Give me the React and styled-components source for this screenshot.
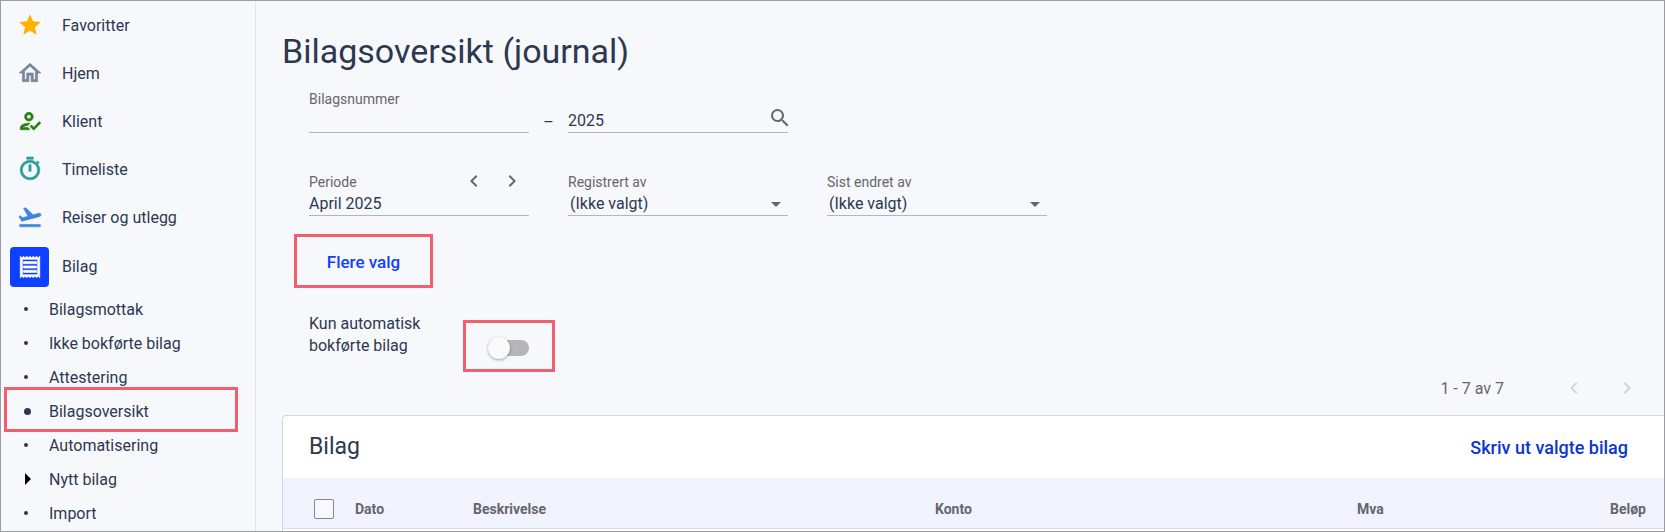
import React from "react";
import styled, { createGlobalStyle, css } from "styled-components";
import {
  MdStar,
  MdOutlineHome,
  MdOutlineHowToReg,
  MdOutlineTimer,
  MdFlightTakeoff,
  MdOutlineReceipt,
  MdSearch,
  MdArrowDropDown,
  MdChevronLeft,
  MdChevronRight,
} from "react-icons/md";

const ink = "#2d3850";
const muted = "#66666a";
const rule = "#b4b5ba";
const blue = "#0f40ff";
const marker = "#ef5f6e";

const GlobalStyle = createGlobalStyle`
  *, *::before, *::after { box-sizing: border-box; }
  body {
    margin: 0;
    background: #f7f8fc;
    color: ${ink};
    font-family: Roboto, "Liberation Sans", sans-serif;
    font-size: 16px;
  }
  button, input, select { font: inherit; color: inherit; }
`;

const Frame = styled.div`
  display: flex;
  height: 100vh;
  overflow: hidden;
  border: 1px solid #9c9ca1;
`;

const Sidebar = styled.nav`
  flex: 0 0 255px;
  border-right: 1px solid #e4e5eb;
`;

const NavList = styled.ul`
  list-style: none;
  margin: 0;
  padding: 0;
`;

const NavLink = styled.a`
  display: flex;
  align-items: center;
  gap: 13px;
  height: ${(p) => (p.$active ? "51px" : "48px")};
  padding-left: 9px;
  color: inherit;
  text-decoration: none;
`;

const NavIcon = styled.span`
  display: grid;
  place-items: center;
  width: 39px;
  height: 40px;
  border-radius: 4px;
  font-size: 26px;
  color: ${(p) => p.$color};
  background: ${(p) => p.$fill || "transparent"};

  path:not([fill="none"]) {
    stroke: currentColor;
    stroke-width: ${(p) => (p.$bold ? "0.6px" : "0")};
  }
`;

const SubItem = styled.li`
  position: relative;
  ${(p) =>
    p.$marked &&
    css`
      &::after {
        content: "";
        position: absolute;
        inset: -7px 17px -4px 3px;
        border: 3px solid ${marker};
        pointer-events: none;
      }
    `}
`;

const SubLink = styled.a`
  display: flex;
  align-items: center;
  height: 34px;
  padding-left: 23px;
  color: inherit;
  text-decoration: none;
`;

const Bullet = styled.span`
  display: flex;
  width: 25px;

  &::before {
    content: "";
    ${(p) =>
      p.$kind === "arrow"
        ? css`
            margin-left: 1px;
            border-left: 6px solid #000;
            border-top: 6px solid transparent;
            border-bottom: 6px solid transparent;
          `
        : css`
            width: ${p.$kind === "current" ? "7px" : "4px"};
            height: ${p.$kind === "current" ? "7px" : "4px"};
            border-radius: 50%;
            background: ${ink};
          `}
  }
`;

const Main = styled.main`
  flex: 1;
  min-width: 0;
  display: flex;
  flex-direction: column;
  padding: 30px 0 0 26px;
`;

const Title = styled.h1`
  margin: 0 0 18px;
  font-size: 34px;
  line-height: 40px;
  font-weight: 400;
`;

const Filters = styled.form`
  padding-left: 27px;
`;

const NumberRow = styled.div`
  display: flex;
  align-items: flex-end;
  margin-bottom: 39px;
`;

const Dash = styled.span`
  width: 39px;
  text-align: center;
  line-height: 20px;
`;

const FilterRow = styled.div`
  display: flex;
  gap: 39px;
`;

const FieldBox = styled.div`
  width: 220px;
`;

const LabelLine = styled.div`
  display: flex;
  justify-content: space-between;
  align-items: center;
  height: 20px;
  font-size: 14px;
  color: ${muted};
`;

const ControlLine = styled.div`
  display: flex;
  align-items: flex-start;
  height: 24px;
  border-bottom: 1px solid ${rule};
  color: ${muted};
`;

const TextInput = styled.input`
  flex: 1;
  min-width: 0;
  height: 22px;
  padding: 0;
  border: 0;
  outline: 0;
  background: transparent;
  color: ${ink};
`;

const Select = styled.select`
  flex: 1;
  min-width: 0;
  height: 22px;
  padding: 0 0 0 2px;
  margin-right: -24px;
  border: 0;
  outline: 0;
  appearance: none;
  background: transparent;
  color: ${ink};
`;

const SelectLine = styled(ControlLine)`
  svg { pointer-events: none; }
`;

const IconButton = styled.button`
  display: grid;
  place-items: center;
  width: 24px;
  height: 24px;
  padding: 0;
  border: 0;
  background: transparent;
  font-size: 24px;
  color: ${muted};

  &:disabled { color: #d3d4d9; }
`;

const SearchButton = styled(IconButton)`
  width: 20px;
  margin-top: -3px;
`;

const PeriodSteps = styled.span`
  display: flex;
  gap: 14px;
  padding: 0 5px 2px 0;
`;

const Marked = styled.div`
  display: flex;
  align-items: center;
  justify-content: center;
  width: ${(p) => p.$width}px;
  border: 3px solid ${marker};
`;

const MoreMark = styled(Marked)`
  height: 54px;
  margin: 18px 0 25px -15px;
  padding-top: 2px;
`;

const TextButton = styled.button`
  height: 36px;
  padding: 0;
  border: 0;
  background: transparent;
  font-size: ${(p) => (p.$large ? "18px" : "17px")};
  font-weight: 500;
  color: ${(p) => p.$color};
`;

const ToggleRow = styled.div`
  display: flex;
  align-items: flex-start;
`;

const ToggleLabel = styled.label`
  width: 154px;
  padding-right: 34px;
  line-height: 22px;
`;

const ToggleMark = styled(Marked)`
  height: 52px;
  margin-top: 7px;
  padding: 3px 0 0 4px;
`;

const Toggle = styled.input`
  appearance: none;
  display: flex;
  align-items: center;
  width: 36px;
  height: 16px;
  margin: 0;
  border-radius: 8px;
  background: #b5b6ba;

  &::before {
    content: "";
    flex: none;
    width: 22px;
    height: 22px;
    margin-left: -5px;
    border-radius: 50%;
    background: #fafafa;
    box-shadow: 0 1px 3px rgba(0, 0, 0, 0.35);
  }

  &:checked::before { margin-left: 19px; }
`;

const Pager = styled.div`
  display: flex;
  align-items: center;
  justify-content: flex-end;
  height: 32px;
  margin-bottom: 11px;
  padding-right: 25px;
  color: ${muted};
`;

const PagerSteps = styled.div`
  display: flex;
  gap: 29px;
  margin-left: 58px;
`;

const Card = styled.section`
  flex: 1 0 auto;
  border: solid #d5d6dc;
  border-width: 1px 0 0 1px;
  border-radius: 4px 0 0 0;
  background: #fff;
  overflow: hidden;
`;

const CardHeader = styled.header`
  display: flex;
  align-items: center;
  justify-content: space-between;
  height: 62px;
  padding: 0 36px 0 26px;
`;

const CardTitle = styled.h2`
  margin: 0;
  font-size: 23px;
  line-height: 28px;
  font-weight: 400;
`;

const Table = styled.table`
  width: 100%;
  table-layout: fixed;
  border-collapse: separate;
  border-spacing: 0;
`;

const HeadCell = styled.th`
  width: ${(p) => (p.$width ? `${p.$width}px` : "auto")};
  height: 51px;
  padding: 12px ${(p) => (p.$right ? 18 : 0)}px 0 ${(p) => (p.$right ? 0 : 12)}px;
  border-bottom: 1px solid #dcdde3;
  background: #f1f3fe;
  color: ${muted};
  font-size: 14px;
  font-weight: 700;
  text-align: ${(p) => (p.$right ? "right" : "left")};
`;

const CheckCell = styled(HeadCell)`
  padding-left: 31px;
`;

const CheckBox = styled.input`
  appearance: none;
  display: block;
  width: 20px;
  height: 20px;
  margin: 0;
  border: 1px solid #7d8499;
  border-radius: 2px;
  background: #f8f9fd;
`;

const navItems = [
  { label: "Favoritter", icon: MdStar, color: "#ffb300" },
  { label: "Hjem", icon: MdOutlineHome, color: "#76879b", bold: true },
  { label: "Klient", icon: MdOutlineHowToReg, color: "#25800f", bold: true },
  { label: "Timeliste", icon: MdOutlineTimer, color: "#2b9c9c", bold: true },
  { label: "Reiser og utlegg", icon: MdFlightTakeoff, color: "#3d86dc", bold: true },
  { label: "Bilag", icon: MdOutlineReceipt, color: "#fff", fill: blue, active: true, bold: true },
];

const subItems = [
  { label: "Bilagsmottak" },
  { label: "Ikke bokførte bilag" },
  { label: "Attestering" },
  { label: "Bilagsoversikt", kind: "current" },
  { label: "Automatisering" },
  { label: "Nytt bilag", kind: "arrow" },
  { label: "Import" },
];

function PersonSelect({ id, label }) {
  return (
    <FieldBox>
      <LabelLine>
        <label htmlFor={id}>{label}</label>
      </LabelLine>
      <SelectLine>
        <Select id={id}>
          <option>(Ikke valgt)</option>
        </Select>
        <MdArrowDropDown size={24} />
      </SelectLine>
    </FieldBox>
  );
}

export default function App() {
  return (
    <Frame>
      <GlobalStyle />
      <Sidebar>
        <NavList>
          {navItems.map(({ label, icon: Icon, color, fill, active, bold }) => (
            <li key={label}>
              <NavLink href="#" $active={active}>
                <NavIcon $color={color} $fill={fill} $bold={bold}>
                  <Icon />
                </NavIcon>
                {label}
              </NavLink>
            </li>
          ))}
        </NavList>
        <NavList>
          {subItems.map(({ label, kind }) => (
            <SubItem key={label} $marked={kind === "current"}>
              <SubLink href="#">
                <Bullet $kind={kind} />
                {label}
              </SubLink>
            </SubItem>
          ))}
        </NavList>
      </Sidebar>

      <Main>
        <Title>Bilagsoversikt (journal)</Title>
        <Filters onSubmit={(e) => e.preventDefault()}>
          <NumberRow>
            <FieldBox>
              <LabelLine>
                <label htmlFor="number">Bilagsnummer</label>
              </LabelLine>
              <ControlLine>
                <TextInput id="number" />
              </ControlLine>
            </FieldBox>
            <Dash>–</Dash>
            <FieldBox>
              <ControlLine>
                <TextInput aria-label="År" defaultValue="2025" />
                <SearchButton type="submit" aria-label="Søk">
                  <MdSearch />
                </SearchButton>
              </ControlLine>
            </FieldBox>
          </NumberRow>

          <FilterRow>
            <FieldBox>
              <LabelLine>
                <label htmlFor="period">Periode</label>
                <PeriodSteps>
                  <IconButton type="button" aria-label="Forrige periode">
                    <MdChevronLeft />
                  </IconButton>
                  <IconButton type="button" aria-label="Neste periode">
                    <MdChevronRight />
                  </IconButton>
                </PeriodSteps>
              </LabelLine>
              <ControlLine>
                <TextInput id="period" defaultValue="April 2025" />
              </ControlLine>
            </FieldBox>
            <PersonSelect id="registered" label="Registrert av" />
            <PersonSelect id="changed" label="Sist endret av" />
          </FilterRow>

          <MoreMark $width={139}>
            <TextButton type="button" $color={blue}>
              Flere valg
            </TextButton>
          </MoreMark>

          <ToggleRow>
            <ToggleLabel htmlFor="auto">Kun automatisk bokførte bilag</ToggleLabel>
            <ToggleMark $width={92}>
              <Toggle id="auto" type="checkbox" role="switch" />
            </ToggleMark>
          </ToggleRow>
        </Filters>

        <Pager>
          <span>1 - 7 av 7</span>
          <PagerSteps>
            <IconButton type="button" aria-label="Forrige side" disabled>
              <MdChevronLeft />
            </IconButton>
            <IconButton type="button" aria-label="Neste side" disabled>
              <MdChevronRight />
            </IconButton>
          </PagerSteps>
        </Pager>

        <Card>
          <CardHeader>
            <CardTitle>Bilag</CardTitle>
            <TextButton type="button" $color="#0d35d2" $large>
              Skriv ut valgte bilag
            </TextButton>
          </CardHeader>
          <Table>
            <thead>
              <tr>
                <CheckCell $width={60}>
                  <CheckBox type="checkbox" aria-label="Velg alle" />
                </CheckCell>
                <HeadCell $width={118}>Dato</HeadCell>
                <HeadCell $width={462}>Beskrivelse</HeadCell>
                <HeadCell>Konto</HeadCell>
                <HeadCell $width={180}>Mva</HeadCell>
                <HeadCell $width={139} $right>
                  Beløp
                </HeadCell>
              </tr>
            </thead>
          </Table>
        </Card>
      </Main>
    </Frame>
  );
}
